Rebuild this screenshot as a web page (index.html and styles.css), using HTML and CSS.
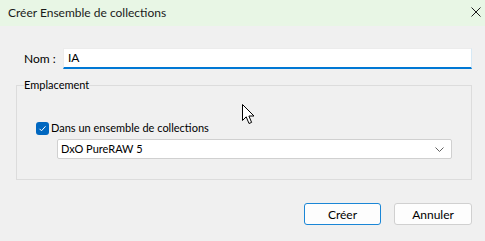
FILE: index.html
```html
<!DOCTYPE html>
<html lang="fr">
<head>
<meta charset="utf-8">
<title>Créer Ensemble de collections</title>
<link rel="stylesheet" href="styles.css">
</head>
<body>
<div class="dialog">
  <div class="titlebar">
    <span class="title">Créer Ensemble de collections</span>
    <svg class="close" width="10" height="10" viewBox="0 0 10 10"><path d="M0.5 0.5 L9.5 9.5 M9.5 0.5 L0.5 9.5" stroke="#1a1a1a" stroke-width="1" fill="none"/></svg>
  </div>
  <div class="content">
    <div class="name-row">
      <label class="name-label">Nom :</label>
      <div class="name-input">IA</div>
    </div>
    <fieldset class="group">
      <legend class="group-legend">Emplacement</legend>
      <div class="check-row">
        <span class="checkbox"><svg width="13" height="13" viewBox="0 0 13 13"><path d="M3.5 6.8 L5.5 8.8 L9.5 4.3" stroke="#fff" stroke-width="1" fill="none"/></svg></span>
        <span class="check-label">Dans un ensemble de collections</span>
      </div>
      <div class="select">
        <span class="select-text">DxO PureRAW 5</span>
        <svg class="chevron" width="9" height="5" viewBox="0 0 9 5"><path d="M0.5 0.5 L4.5 4.5 L8.5 0.5" stroke="#606060" stroke-width="1" fill="none"/></svg>
      </div>
    </fieldset>
    <div class="buttons">
      <div class="btn btn-primary">Créer</div>
      <div class="btn">Annuler</div>
    </div>
  </div>
  <svg class="cursor" width="14" height="22" viewBox="0 0 14 22"><path d="M0.5 0.5 L0.5 16.5 L4.2 12.8 L7 19.5 L9.6 18.4 L6.9 12 L12 12 Z" fill="#fff" stroke="#000" stroke-width="1" stroke-linejoin="miter"/></svg>
</div>
</body>
</html>
```
FILE: styles.css
```css
* { box-sizing: border-box; }
html, body { margin: 0; padding: 0; }
body {
  width: 485px;
  height: 241px;
  background: #f0f0f0;
  font-family: Lato, "Noto Sans", sans-serif;
  font-size: 11px;
  color: #000;
  overflow: hidden;
}
.dialog { position: relative; width: 485px; height: 241px; }
.titlebar {
  height: 26px;
  background: #e8f6e5;
  display: flex;
  align-items: center;
  justify-content: space-between;
  padding: 0 4px 0 8px;
  color: #1a1a1a;
  font-size: 12px;
}
.title { line-height: 16px; }
.close { margin-top: -2px; }
.content { padding: 22px 13px 0 16px; }
.name-row {
  display: flex;
  align-items: center;
  padding-left: 8px;
  height: 21px;
  font-size: 12px;
}
.name-label { width: 39px; line-height: 16px; }
.name-input {
  width: 409px;
  height: 21px;
  background: #fff;
  border: 1px solid #ececec;
  border-right-color: #d6e9f5;
  border-bottom: 2px solid #0078d4;
  padding: 0 4px;
  line-height: 18px;
}
.group {
  margin: 8px 0 0 0;
  padding: 0;
  width: 456px;
  height: 103px;
  border: 1px solid #dcdcdc;
  min-width: 0;
}
.group-legend {
  margin-left: 7px;
  padding: 0;
  line-height: 16px;
}
.check-row {
  display: flex;
  align-items: center;
  margin: 28px 0 0 19px;
  height: 14px;
}
.checkbox {
  width: 13px;
  height: 13px;
  background: #0067c0;
  border-radius: 3px;
  display: flex;
  margin-right: 2px;
}
.check-label { line-height: 16px; }
.select {
  margin: 4px 0 0 40px;
  width: 395px;
  height: 20px;
  background: #fff;
  border: 1px solid #d0d0d0;
  border-radius: 2px;
  display: flex;
  align-items: center;
  justify-content: space-between;
  padding: 0 7px 0 3px;
}
.select-text { line-height: 16px; }
.chevron { margin-top: 1px; }
.buttons {
  display: flex;
  justify-content: flex-end;
  gap: 13px;
  margin-top: 23px;
}
.btn {
  height: 22px;
  width: 78px;
  background: #fdfdfd;
  border: 1px solid #d0d0d0;
  border-radius: 3px;
  display: flex;
  align-items: center;
  justify-content: center;
  font-size: 12px;
}
.btn-primary { width: 77px; border-color: #1a86d6; }
.cursor { position: absolute; left: 242px; top: 104px; }
```
